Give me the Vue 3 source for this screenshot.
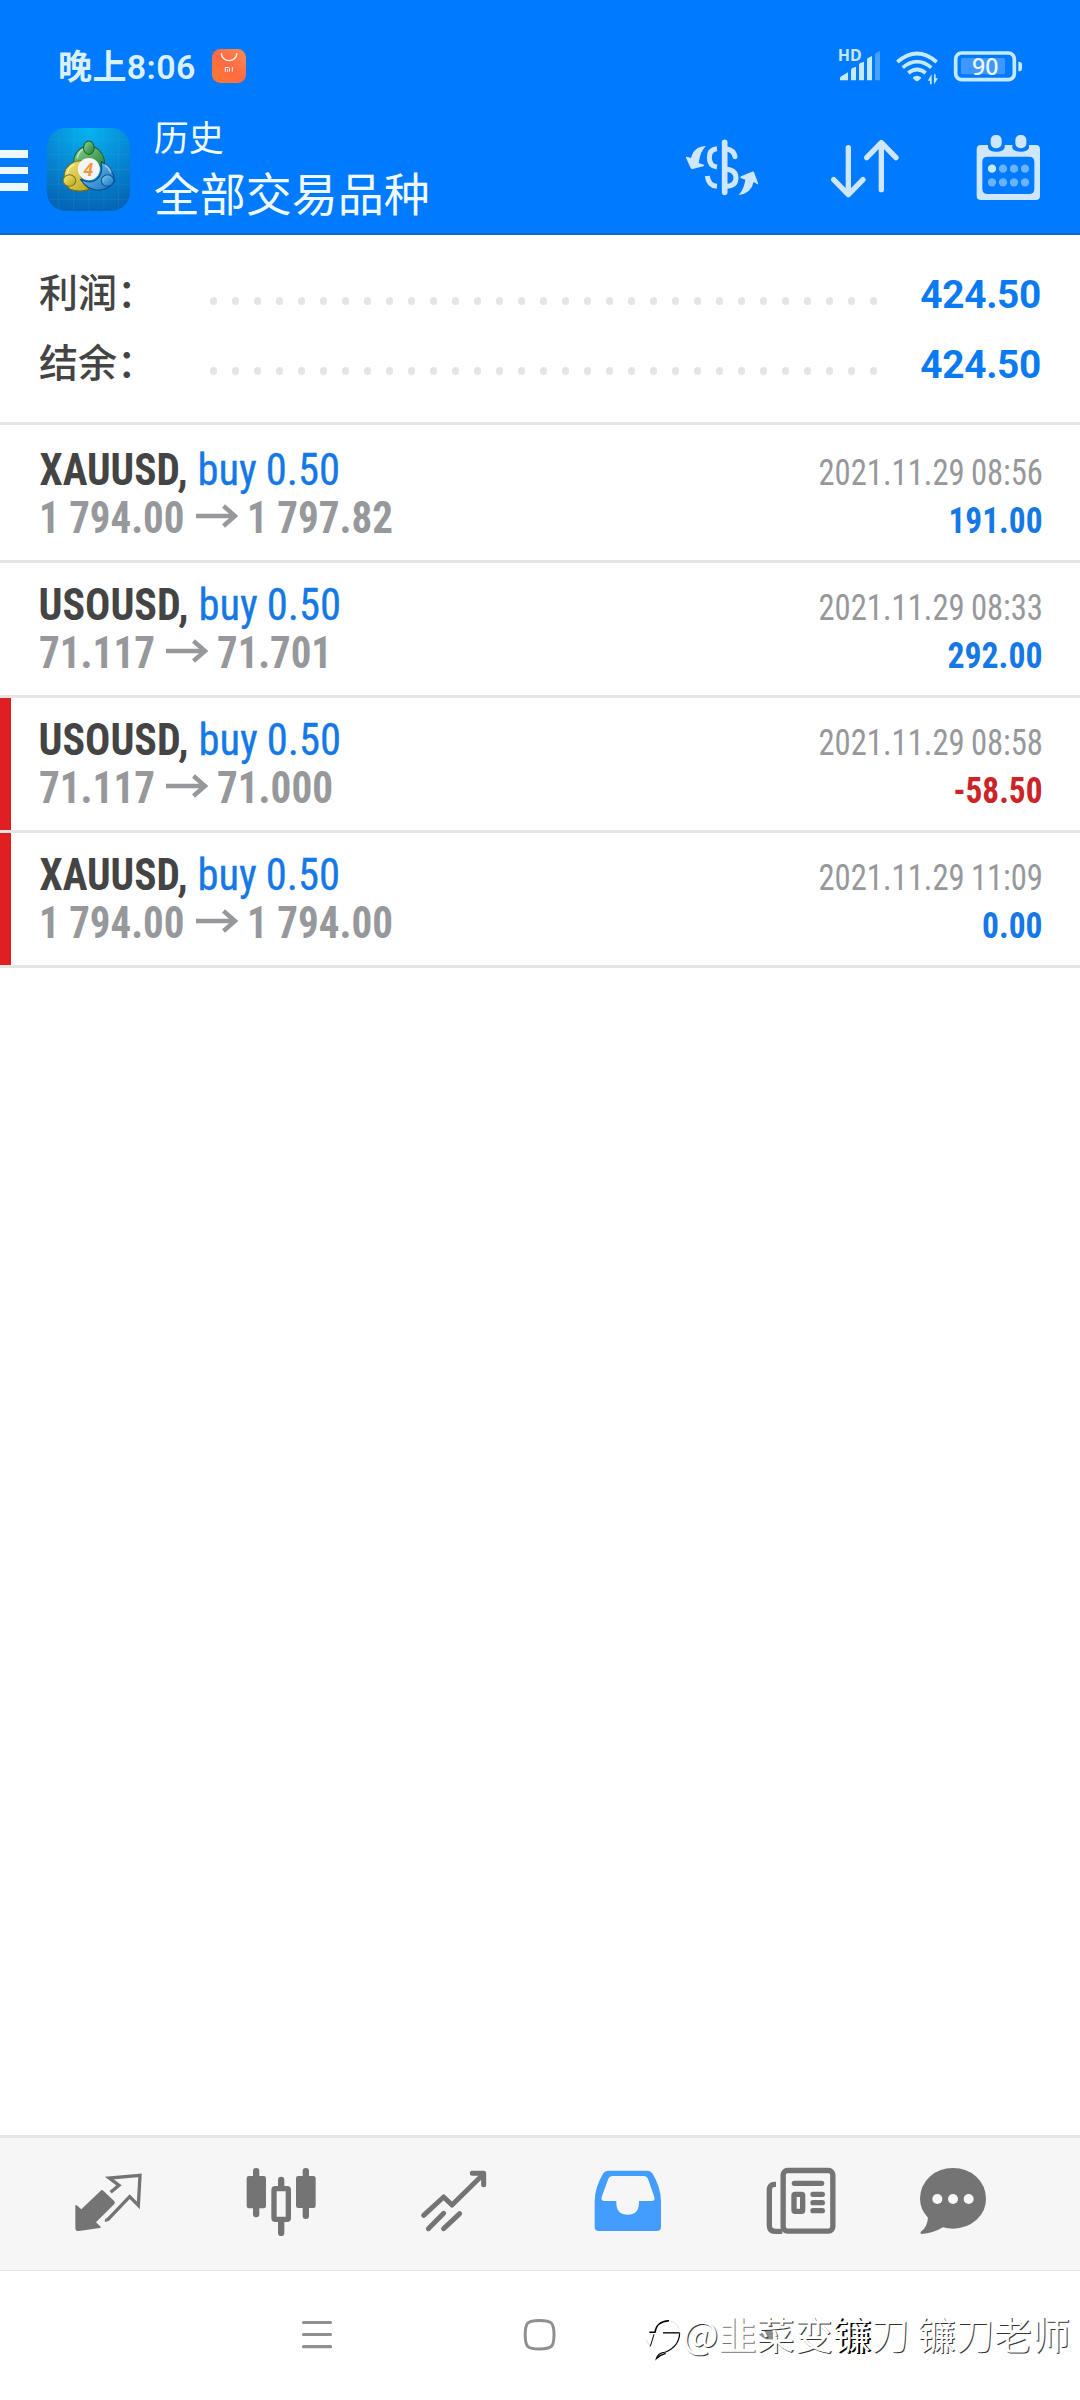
<script setup>
const summary = [
  { label: '利润：', value: '424.50' },
  { label: '结余：', value: '424.50' },
]

const deals = [
  { symbol: 'XAUUSD,', symX: 39.5, symW: 148, side: 'buy 0.50', sideX: 197.5, sideW: 142.5, open: '1 794.00', openX: 39, openW: 145.5, arrowX: 196, close: '1 797.82', closeX: 247, closeW: 146, time: '2021.11.29 08:56', profit: '191.00', profitW: 94, loss: false, stop: false },
  { symbol: 'USOUSD,', symX: 38.5, symW: 150, side: 'buy 0.50', sideX: 198.5, sideW: 142.5, open: '71.117', openX: 39, openW: 116, arrowX: 166, close: '71.701', closeX: 217, closeW: 115, time: '2021.11.29 08:33', profit: '292.00', profitW: 95, loss: false, stop: false },
  { symbol: 'USOUSD,', symX: 38.5, symW: 150, side: 'buy 0.50', sideX: 198.5, sideW: 142.5, open: '71.117', openX: 39, openW: 116, arrowX: 166, close: '71.000', closeX: 217, closeW: 116, time: '2021.11.29 08:58', profit: '-58.50', profitW: 89, loss: true, stop: true },
  { symbol: 'XAUUSD,', symX: 39.5, symW: 148, side: 'buy 0.50', sideX: 197.5, sideW: 142.5, open: '1 794.00', openX: 39, openW: 145.5, arrowX: 196, close: '1 794.00', closeX: 247, closeW: 146, time: '2021.11.29 11:09', profit: '0.00', profitW: 60.5, loss: false, stop: true },
]
</script>

<template>
  <div class="screen">
    <header class="header">
      <div class="status">
        <span class="clock">晚上8:06</span>
        <svg class="bag" width="34" height="34" viewBox="0 0 34 34">
          <defs>
            <linearGradient id="bag" x1="0" y1="1" x2="1" y2="0">
              <stop offset="0" stop-color="#ff7a2c" /><stop offset=".5" stop-color="#ff6a44" /><stop offset="1" stop-color="#ff8d50" />
            </linearGradient>
          </defs>
          <rect width="34" height="34" rx="8.5" fill="url(#bag)" />
          <path d="M9.3 4.3c.6 9.8 15 9.8 15.600 0" fill="none" stroke="#fff" stroke-width="1.3" />
          <path d="M13.300 22.700v-4.200h3q1.200 0 1.200 1.200v3M15.400 22.700v-2.400M20.300 18v4.700" fill="none" stroke="#fff" stroke-width="1" />
        </svg>
        <svg class="signals" width="186" height="38" viewBox="534 50 558 114">
          <g fill="#c5e9ff">
            <text class="hd" x="533" y="93" textLength="72" lengthAdjust="spacingAndGlyphs">HD</text>
            <path d="M540 150v-6q0-4 4-6l20-12v24zM573 150v-30q0-5 4-7l11-4v41zM597 150v-46q0-5 4-6l11-4v56zM621 150v-62q0-5 4-6l11-5v73z" />
            <path d="M645 150v-76q0-5 4-7l11-5v88z" opacity=".35" />
            <path d="M759 141q12-9 24 0q1 2-1 4l-8 7q-3 2-6 0l-8-7q-2-2-1-4z" />
          </g>
          <g fill="none" stroke="#c5e9ff" stroke-width="11">
            <path d="M712 95q59-51 118 0M728 112q43-36 86 0M745 128q26-21 52 0" />
          </g>
          <path d="M815 132v30h-5v-11h-7zM822 162v-30h5v12h7z" fill="#c5e9ff" />
          <rect x="903" y="83" width="132" height="49" rx="6" fill="#3e98ff" />
          <rect x="887" y="68" width="176" height="80" rx="18" fill="none" stroke="#c5e9ff" stroke-width="11" />
          <path d="M1075 94q11 0 11 8v13q0 8-11 8z" fill="#c5e9ff" />
          <text class="charge" x="936" y="134" textLength="79" lengthAdjust="spacingAndGlyphs">90</text>
        </svg>
      </div>

      <div class="toolbar">
        <div class="menu"><i></i><i></i><i></i></div>
        <svg class="logo" width="83" height="83" viewBox="50 53 248 248">
          <defs>
            <radialGradient id="sky" cx=".5" cy="0" r="1">
              <stop offset="0" stop-color="#05b5f0" /><stop offset=".55" stop-color="#0787d2" /><stop offset="1" stop-color="#0465b5" />
            </radialGradient>
            <linearGradient id="green" x1="0" y1="0" x2="1" y2="1"><stop offset="0" stop-color="#8ed492" /><stop offset="1" stop-color="#1d7e35" /></linearGradient>
            <linearGradient id="gold" x1="0" y1="0" x2="1" y2="1"><stop offset="0" stop-color="#f5e976" /><stop offset="1" stop-color="#b9a41c" /></linearGradient>
            <linearGradient id="blue" x1="0" y1="0" x2="1" y2="1"><stop offset="0" stop-color="#7accf5" /><stop offset="1" stop-color="#1470bb" /></linearGradient>
          </defs>
          <rect x="50" y="53" width="248" height="248" rx="56" fill="url(#sky)" />
          <path d="M85 58v238M130 53v248M175 53v248M220 53v248M264 58v238M50 88h248M50 132h248M50 177h248M50 221h248M50 266h248" stroke="#4fc1ef" stroke-opacity=".2" stroke-width="2" />
          <g stroke-width="3" stroke-linejoin="round">
            <path d="M133 172q-10-32 10-51q14-15 32-15t32 15q21 21 13 58q-18-28-45-26q-28 0-42 19z" fill="url(#green)" stroke="#165c31" />
            <path d="M177 236q-30 11-58 0q-15-12-18-34q-2-32 29-47q16-6 29-4q-15 22-9 43q8 28 27 42z" fill="url(#gold)" stroke="#766916" />
            <path d="M212 153q38 20 40 59q-14 24-47 27q-34 0-55-32q30 14 48 0q21-15 14-54z" fill="url(#blue)" stroke="#0b4986" />
            <path d="M141 142q4-20 18-26M110 190q3-20 20-28M240 184q-5-14-16-20" fill="none" stroke="#fff" stroke-opacity=".5" stroke-width="5" stroke-linecap="round" />
            <ellipse cx="175" cy="112" rx="16" ry="20" fill="url(#green)" stroke="#176035" />
            <ellipse cx="117" cy="210" rx="19" ry="17" fill="url(#gold)" stroke="#81711b" />
            <ellipse cx="231" cy="210" rx="19" ry="17" fill="url(#blue)" stroke="#0b5394" />
          </g>
          <circle cx="175" cy="176" r="33" fill="#f5f5f5" />
          <text x="173" y="196" class="four">4</text>
        </svg>
        <div class="titles">
          <span class="title">历史</span>
          <span class="subtitle">全部交易品种</span>
        </div>
        <div class="actions">
          <svg width="75" height="66.700" viewBox="75 315 225 200">
            <g fill="#cfe6ff">
              <path d="M138 348q-36 1-45 36l-13-4q-3 0-2 3l14 31q2 4 6 3l32-8q4-2 2-5l-16-5q5-36 22-51z" />
              <path d="M236 495q37-4 45-39l10 6q4 2 3-3l-11-30q-2-5-7-4l-33 14q-4 2-1 5l14 5q-4 29-20 46z" />
            </g>
            <g fill="none" stroke="#cfe6ff" stroke-width="15">
              <path d="M194 337v150" stroke-width="17" stroke-linecap="round" />
              <path d="M171 356q-23 2-23 27t23 28M142 438q3 29 29 31" />
              <path d="M198 356q24 4 27 24" stroke-linecap="round" />
              <path d="M198 418q30 2 30 26t-30 25" />
            </g>
          </svg>
          <svg width="70" height="66.700" viewBox="511 315 210 200">
            <path d="M566 353v140M522 449l44 45l44-45M665 479v-140M621 383l44-45l44 45" fill="none" stroke="#cfe6ff" stroke-width="16" stroke-linecap="round" stroke-linejoin="round" />
          </svg>
          <svg class="calendar" width="66.700" height="66.700" viewBox="945 315 200 200">
            <path fill="#cfe6ff" fill-rule="evenodd" d="M963 345h21v8q4 12 25 12t25-12v-8h23v8q4 12 25 12t25-12v-8h20q13 0 13 13v139q0 13-13 13H963q-13 0-13-13V358q0-13 13-13zM983 380q-16 0-16 16v80q0 16 16 16h124q16 0 16-16v-80q0-16-16-16z" />
            <rect x="992" y="315" width="33" height="40" rx="15" fill="#cfe6ff" />
            <rect x="1066" y="315" width="33" height="40" rx="15" fill="#cfe6ff" />
            <circle cx="996" cy="416" r="12.500" fill="#c5eaff" />
            <g fill="#6ab4ff">
              <circle v-for="n in 3" :key="n" :cx="996 + n * 33" cy="416" r="12.500" />
              <circle v-for="n in 4" :key="'b' + n" :cx="963 + n * 33" cy="457" r="12.500" />
            </g>
          </svg>
        </div>
      </div>
    </header>

    <section class="summary">
      <div v-for="s in summary" :key="s.label" class="sum-row">
        <span class="sum-label">{{ s.label }}</span>
        <span class="dots"><i v-for="n in 31" :key="n"></i></span>
        <span class="sum-value">{{ s.value }}</span>
      </div>
    </section>

    <ul class="deals">
      <li v-for="(d, i) in deals" :key="i" class="deal" :class="{ stop: d.stop }">
        <svg width="1080" height="132" viewBox="0 0 1080 132">
          <text class="sym" :x="d.symX" y="57" :textLength="d.symW" lengthAdjust="spacingAndGlyphs">{{ d.symbol }}</text>
          <text class="side" :x="d.sideX" y="57" :textLength="d.sideW" lengthAdjust="spacingAndGlyphs">{{ d.side }}</text>
          <text class="price" :x="d.openX" y="105.300" :textLength="d.openW" lengthAdjust="spacingAndGlyphs">{{ d.open }}</text>
          <text class="price" :x="d.closeX" y="105.300" :textLength="d.closeW" lengthAdjust="spacingAndGlyphs">{{ d.close }}</text>
          <text class="time" x="818.500" y="57" textLength="224.500" lengthAdjust="spacingAndGlyphs">{{ d.time }}</text>
          <text class="profit" :class="{ loss: d.loss }" :x="1042.500 - d.profitW" y="105.300" :textLength="d.profitW" lengthAdjust="spacingAndGlyphs">{{ d.profit }}</text>
          <path :transform="`translate(${d.arrowX} 88)`" d="M0 0H39M27.500 -10L39 0L27.500 10" fill="none" stroke="#97989c" stroke-width="4.400" />
        </svg>
      </li>
    </ul>

    <nav class="tabs">
      <svg viewBox="85 132 240 240">
        <path d="M107 257q0-4 4-1l14 12l58-56q4-4 8 0l33 32q4 4 0 8l-55 55l12 11q5 5-1 6l-62 9q-11 1-11-10z" fill="#747474" />
        <path d="M213 217l25-21l-29-22l92-8l-5 90l-26-26l-65 68q-5 3-9 2" fill="none" stroke="#747474" stroke-width="10" />
      </svg>
      <svg viewBox="603 132 240 240">
        <g fill="#747474">
          <rect x="639" y="144" width="19" height="148" rx="9" /><rect x="620" y="168" width="58" height="97" rx="7" />
          <rect x="788" y="144" width="19" height="153" rx="9" /><rect x="768" y="168" width="59" height="96" rx="7" />
          <path d="M714 200v-20q0-10 9.500-10t9.500 10v20zM714 304v34q0 10 9.500 10t9.500-10v-34z" />
        </g>
        <rect x="702" y="206" width="43" height="92" rx="4" fill="none" stroke="#747474" stroke-width="16" />
      </svg>
      <svg viewBox="1123 132 240 240">
        <g fill="none" stroke="#747474" stroke-width="15" stroke-linecap="round" stroke-linejoin="round">
          <path d="M1152 286l60-55l25 24l94-92M1298 160h34v34" />
          <path d="M1166 326l46-46M1212 326l48-45" />
        </g>
      </svg>
      <svg viewBox="83 132 240 240">
        <path d="M143 152h119q9 0 14 8q26 43 26 84v76q0 13-13 13H115q-12 0-12-13v-76q0-41 26-84q5-8 14-8zM156 168q-9 0-12 8l-20 55q-3 12 8 12h36v8q2 33 34 33t34-33v-8h38q11 0 8-12l-19-55q-4-8-12-8z" fill="#429dff" fill-rule="evenodd" />
      </svg>
      <svg viewBox="603 132 240 240">
        <rect x="669.500" y="151.500" width="149" height="182" rx="13" fill="none" stroke="#747474" stroke-width="16" />
        <path d="M648 193h-4q-16 0-16 18v105q0 18 17 18h22" fill="none" stroke="#747474" stroke-width="16" />
        <path d="M703 190h82M759 223h28M759 248h28M759 272h28" stroke="#747474" stroke-width="16" stroke-linecap="round" />
        <rect x="702" y="223" width="26" height="51" rx="3" fill="none" stroke="#747474" stroke-width="16" />
      </svg>
      <svg viewBox="1122 132 240 240">
        <path d="M1179 144q42 0 70 26t29 65t-29 65t-70 26q-16 0-30-4q-30 18-64 20q-6-1-3-6q20-15 22-43q-24-24-24-58q1-39 29-65t70-26z" fill="#747474" />
        <g fill="#f8f8f8"><circle cx="1132" cy="237" r="15" /><circle cx="1179" cy="237" r="15" /><circle cx="1226" cy="237" r="15" /></g>
      </svg>
    </nav>

    <footer class="sysnav">
      <svg width="1080" height="129" viewBox="0 0 1080 129">
        <path d="M303.500 51.500h27M303.500 63.500h27M303.500 75.700h27" stroke="#8f8f8f" stroke-width="3.200" stroke-linecap="round" />
        <path d="M539.500 49.500c12 0 14.500 2 14.500 14.200s-2.500 14.300-14.500 14.300s-14.300-2-14.300-14.300s2.300-14.200 14.300-14.200z" fill="none" stroke="#8f8f8f" stroke-width="3" />
        <path d="M773 54l-14 9.700l14 9.700z" fill="#8f8f8f" />
      </svg>
      <div class="mark">
        <svg width="36" height="44" viewBox="24 50 108 132">
          <g fill="none" stroke="#000" stroke-width="4">
            <path d="M37 93h17q4-33 42-35" stroke-width="4.500" />
            <path d="M78 94.500h50" />
            <path d="M128 96q-2 40-42 56q-23 2-28 20q12-12 28-16" stroke-width="3.500" />
            <path d="M51 99l-11 36" stroke-width="3" />
            <path d="M27 116l13 20M98 58q22 6 28 24" stroke="#bbb" stroke-width="1.500" />
          </g>
        </svg>
        <span class="handle">@<span class="soft">韭</span>菜变<span class="hard">镰</span>刀 镰刀老师</span>
      </div>
    </footer>
  </div>
</template>

<style>
body { background: #fff; }
</style>

<style scoped>
.screen {
  width: 1080px;
  height: 2400px;
  display: flex;
  flex-direction: column;
  background: #fff;
  font-family: Roboto, "Noto Sans CJK SC", sans-serif;
  overflow: hidden;
}
svg { display: block; flex: none; overflow: visible; }
.header {
  box-sizing: border-box;
  height: 235px;
  padding-top: 27px;
  background: #007aff;
  border-bottom: 2px solid #1069c6;
}
.status { display: flex; align-items: center; height: 78px; padding: 0 56px 0 58px; }
.clock { width: 154px; margin-top: 2px; font-size: 34px; font-weight: 600; letter-spacing: .4px; line-height: 40px; color: #d9f1ff; white-space: nowrap; }
.signals { margin-left: auto; }
.hd { font: 700 46px "Noto Sans", sans-serif; }
.charge { font: 500 68px "Noto Sans", sans-serif; fill: #f0faff; }
.toolbar { display: flex; align-items: center; height: 128px; padding-right: 38.300px; }
.menu { display: flex; flex-direction: column; gap: 9px; width: 28px; margin: 3px 18.700px 0 0; }
.menu i { height: 7.600px; background: #ecf7ff; }
.logo { margin-right: -1px; }
.four { font: italic 700 54px Roboto, sans-serif; fill: #f3953d; text-anchor: middle; }
.titles { display: flex; flex-direction: column; margin: 4px 0 0 25px; color: #f0fbff; white-space: nowrap; }
.title { font-size: 35px; line-height: 48px; }
.subtitle { font-size: 46px; line-height: 62px; }
.actions { display: flex; align-items: center; gap: 70px; margin: -1px 0 0 auto; }
.calendar { margin-left: 5px; }
.summary {
  box-sizing: border-box;
  height: 190px;
  padding: 24px 39px 0 39px;
  border-bottom: 3px solid #e5e5e5;
}
.sum-row { display: flex; align-items: center; height: 70px; color: #444; }
.sum-label { width: 171px; margin-top: -8px; font-size: 39px; font-weight: 500; white-space: nowrap; }
.dots { display: flex; gap: 14.800px; margin-top: 14px; }
.dots i { width: 7.200px; height: 7.200px; border-radius: 50%; background: #e5e5e5; }
.sum-value { margin-left: auto; font-size: 38.800px; font-weight: 700; letter-spacing: -.3px; color: #0a7af2; }
.deals { list-style: none; margin: 3px 0 0; padding: 0; }
.deal { height: 132px; border-bottom: 3px solid #e5e5e5; }
.stop { background: linear-gradient(90deg, #e02020 11px, #fff 11px); background-clip: padding-box; }
.deal text { font-family: "Roboto Condensed", Roboto, sans-serif; font-stretch: condensed; }
.deal .sym { font-size: 44px; font-weight: 700; fill: #444; }
.deal .side { font-size: 44px; fill: #1478e6; stroke: #1478e6; stroke-width: .3px; word-spacing: -1px; }
.deal .price { font-size: 44px; font-weight: 700; fill: #97989c; }
.deal .time { font-size: 37px; fill: #97989c; word-spacing: -1.500px; }
.deal .profit { font-size: 36.500px; font-weight: 700; fill: #1478e6; }
.deal .profit.loss { fill: #cb2427; }
.tabs {
  box-sizing: border-box;
  display: flex;
  justify-content: space-between;
  align-items: center;
  height: 136px;
  margin-top: auto;
  padding: 0 66px 0 68px;
  background: #f6f6f6;
  border-top: 3px solid #e4e5e5;
  border-bottom: 1px solid #e2e2e2;
}
.tabs svg { width: 80px; height: 80px; }
.sysnav { position: relative; height: 129px; }
.mark { position: absolute; right: 10px; top: 34px; display: flex; align-items: center; gap: 1px; height: 56px; }
.mark svg { margin-top: 14px; }
.handle { font: 400 38px/56px "Noto Sans CJK SC", sans-serif; letter-spacing: .1px; color: #fff; white-space: nowrap; text-shadow: 1px 1px 0 #333; }
.soft { text-shadow: 1px 1px 0 #777; }
.hard { text-shadow: 1px 1px 0 #000, 2px 1px 0 #000; }
</style>
